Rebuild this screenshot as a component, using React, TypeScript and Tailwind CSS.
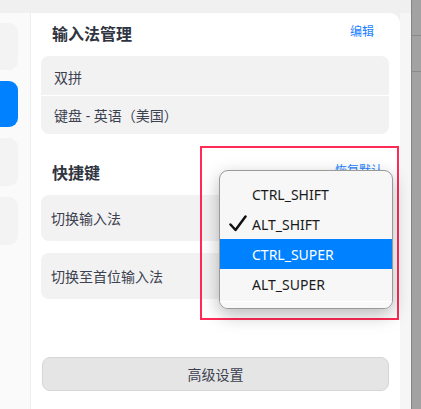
import React from "react";

const font = { fontFamily: '"Noto Sans", "Noto Sans CJK SC", sans-serif' };

const options = ["CTRL_SHIFT", "ALT_SHIFT", "CTRL_SUPER", "ALT_SUPER"];

function Sidebar() {
  return (
    <div className="w-[31px] shrink-0 bg-[#fafafa] border-r border-[#eeeeee] flex flex-col pt-[10px] gap-[11px]">
      <div className="w-[18px] h-[47px] rounded-r-[9px] bg-[#f3f3f3]" />
      <div className="w-[18px] h-[46px] rounded-r-[9px] bg-[#0081ff]" />
      <div className="w-[18px] h-[48px] rounded-r-[9px] bg-[#f3f3f3]" />
      <div className="w-[18px] h-[48px] rounded-r-[9px] bg-[#f3f3f3]" />
    </div>
  );
}

function Check() {
  return (
    <svg width="18" height="18" viewBox="0 0 18 18" className="absolute left-[9px] top-[6px]">
      <path d="M1.5 9.5 L6.5 15 L16.5 1.5" fill="none" stroke="#111" strokeWidth="2.5" strokeLinecap="round" strokeLinejoin="round" />
    </svg>
  );
}

function Popup() {
  return (
    <div className="absolute left-[219px] top-[170px] w-[174px] h-[139px] rounded-[9px] border border-[#9a9a9a] bg-[#f7f7f7] shadow-[0_6px_18px_rgba(0,0,0,0.28)] overflow-hidden flex flex-col pt-[8px]">
      {options.map((o, i) => (
        <div
          key={o}
          className={
            "relative h-[30px] flex items-center pl-[32px] text-[14px] " +
            (i === 2 ? "bg-[#0081ff] text-white" : "text-[#1a1a1a]")
          }
        >
          {i === 1 && <Check />}
          {o}
        </div>
      ))}
      <div className="flex-1 mt-[2px] border-t border-white bg-[#f9f9f9]" />
    </div>
  );
}

export default function App() {
  return (
    <div className="relative w-[421px] h-[409px] bg-[#f0f0f0] flex flex-col overflow-hidden" style={font}>
      <div className="h-[13px] shrink-0" />
      <div className="flex flex-1">
        <Sidebar />
        <div className="w-[369px] bg-white rounded-tr-[10px] pl-[10px] pr-[11px] flex flex-col">
          <div className="mt-[9px] h-[24px] flex items-center justify-between pl-[11px] pr-[15px]">
            <span className="text-[16px] font-bold text-[#2f3440]">输入法管理</span>
            <span className="text-[12px] text-[#1a7fff] -mt-[4px]">编辑</span>
          </div>
          <div className="mt-[10px] rounded-[8px] bg-[#f2f2f2] flex flex-col text-[14px] text-[#3c4150]">
            <div className="h-[39px] flex items-center pl-[13px] pt-[4px]">双拼</div>
            <div className="h-px bg-white" />
            <div className="h-[38px] flex items-center pl-[13px]">键盘 - 英语（美国）</div>
          </div>
          <div className="mt-[27px] h-[24px] flex items-center justify-between pl-[11px] pr-[6px]">
            <span className="text-[16px] font-bold text-[#2f3440]">快捷键</span>
            <span className="text-[12px] text-[#1a7fff] -mt-[4px]">恢复默认</span>
          </div>
          <div className="mt-[10px] h-[46px] rounded-[8px] bg-[#f2f2f2] flex items-center pl-[10px] text-[14px] text-[#3c4150]">
            切换输入法
          </div>
          <div className="mt-[12px] h-[46px] rounded-[8px] bg-[#f2f2f2] flex items-center pl-[10px] text-[14px] text-[#3c4150]">
            切换至首位输入法
          </div>
          <button className="mt-[58px] ml-px h-[34px] rounded-[8px] bg-[#e5e5e5] border border-[#d6d6d6] text-[14px] text-[#3c4150]">
            高级设置
          </button>
        </div>
        <div className="w-[11px] bg-[#f6f6f6]" />
        <div className="w-[10px] -mt-[13px] bg-[#a2a2a2] border-l border-[#858585] flex flex-col">
          <div className="h-[36px] border-b border-[#8a8a8a]" />
          <div className="h-[36px] border-b border-[#8a8a8a]" />
        </div>
      </div>
      <div className="absolute left-[200px] top-[146px] w-[199px] h-[174px] border-2 border-[#ff2a55]" />
      <Popup />
    </div>
  );
}
